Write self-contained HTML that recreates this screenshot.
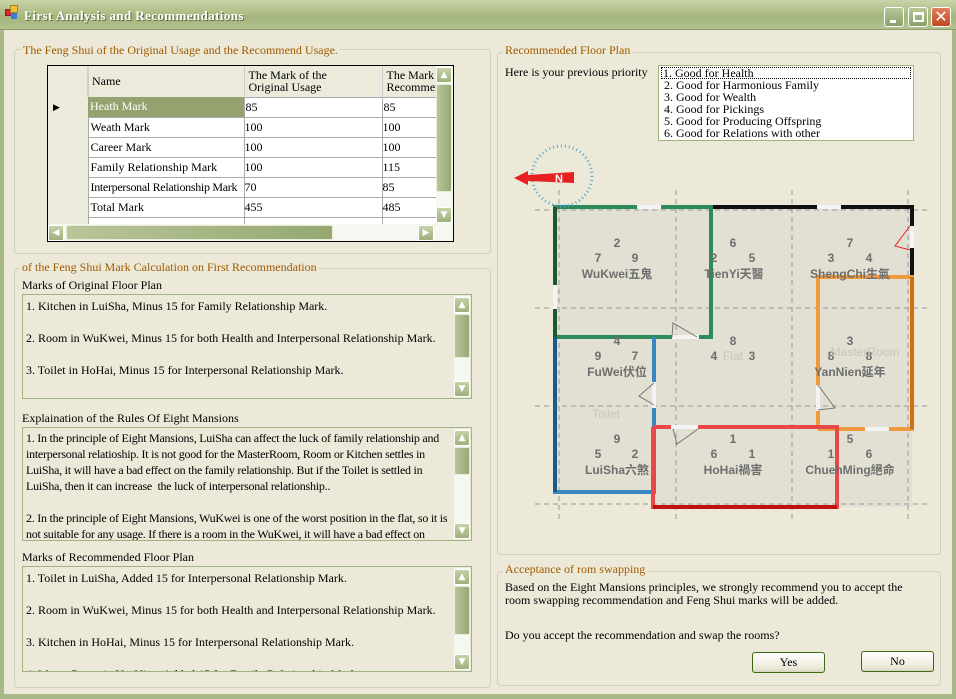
<!DOCTYPE html>
<html><head><meta charset="utf-8"><style>
*{box-sizing:border-box;margin:0;padding:0}
body{width:956px;height:699px;overflow:hidden;background:#ece9d8;font-family:"Liberation Serif",serif;font-size:12px;color:#000;position:relative}
.a{position:absolute}
.title{left:0;top:0;width:956px;height:30px;background:linear-gradient(#c8d4a8,#b0c088 40%,#a3b47c 60%,#b4c290);border-bottom:1px solid #8a9a68}
.frameL{left:0;top:30px;width:4px;height:669px;background:#a8b888}
.frameR{right:0;top:30px;width:4px;height:669px;background:#a8b888}
.frameB{left:0;top:694px;width:956px;height:5px;background:#a8b888}
.grp{border:1px solid #d0d0bf;border-radius:4px}
.lbl{color:#a05a00;background:#ece9d8;padding:0 2px;white-space:nowrap;line-height:14px}
.tb{border:1px solid #9fb482;background:#ece9d8;overflow:hidden;padding:2px 18px 0 3px;line-height:16px;white-space:nowrap}
.vs{position:absolute;right:1px;top:1px;bottom:1px;width:16px;background:#f7f7f2}
.sb{position:absolute;left:0;width:16px;height:16px;background:linear-gradient(#c6d2a8,#9eb07c);border:1px solid #fff;border-radius:2px;color:#fff;font-size:9px;text-align:center;line-height:14px;font-family:"DejaVu Sans",sans-serif}
.th{position:absolute;left:0;width:16px;background:linear-gradient(90deg,#b8c69a,#95a872);border:1px solid #e8ecd8;border-radius:2px}
table{border-collapse:collapse}
.btn{border:1px solid #3c6a10;border-radius:3px;background:linear-gradient(#fff,#ece9d8 80%,#d8d4c0);text-align:center;line-height:18px}
.l32{line-height:32px;padding-top:0}
.l32 .in{margin-top:-5px}
</style></head><body>
<div class="a title"></div>
<div class="a" style="left:5px;top:9px;width:7px;height:7px;background:#d23;border:1px solid #822"></div>
<div class="a" style="left:10px;top:5px;width:8px;height:8px;background:#f0c030;border:1px solid #a08020"></div>
<div class="a" style="left:11px;top:13px;width:6px;height:6px;background:#3a7ad8"></div>
<div class="a" style="left:24px;top:8px;color:#fff;font-weight:bold;font-size:13px;letter-spacing:0.4px;text-shadow:1px 1px 0 #5a6a40">First Analysis and Recommendations</div>
<div class="a" style="left:884px;top:7px;width:20px;height:20px;border:1px solid #fff;border-radius:3px;background:linear-gradient(#b8c898,#8aa068)"><div class="a" style="left:5px;top:12px;width:6px;height:3px;background:#fff"></div></div>
<div class="a" style="left:908px;top:7px;width:20px;height:20px;border:1px solid #fff;border-radius:3px;background:linear-gradient(#b8c898,#8aa068)"><div class="a" style="left:4px;top:4px;width:11px;height:10px;border:2px solid #fff;border-top-width:3px"></div></div>
<div class="a" style="left:931px;top:7px;width:20px;height:20px;border:1px solid #fff;border-radius:3px;background:linear-gradient(#e08060,#c04820);color:#fff;font:bold 16px/18px 'DejaVu Sans',sans-serif;text-align:center">✕</div>
<div class="a frameL"></div><div class="a frameR"></div><div class="a frameB"></div>

<!-- Group 1 -->
<div class="a grp" style="left:14px;top:49px;width:477px;height:205px"></div>
<div class="a lbl" style="left:21px;top:43px">The Feng Shui of the Original Usage and the Recommend Usage.</div>
<div class="a" style="left:47px;top:65px;width:407px;height:177px;border:1px solid #000;background:#fff;overflow:hidden">
 <table style="position:absolute;left:0;top:0;width:390px;table-layout:fixed">
  <colgroup><col style="width:40px"><col style="width:156px"><col style="width:138px"><col style="width:56px"></colgroup>
  <tr style="height:31px;background:#ebeadb"><td style="border-right:2px solid #d0cfc0"></td><td style="padding-left:3px">Name</td><td style="line-height:12px;border-left:1px solid #ccc;padding-left:4px">The Mark of the<br>Original Usage</td><td style="line-height:12px;border-left:1px solid #ccc;padding-left:4px;white-space:nowrap">The Mark<br>Recommen</td></tr>
  <tr style="height:20px"><td style="background:#ebeadb;font-size:9px;padding-left:5px">▶</td><td style="background:#95a270;color:#fff;padding-left:2px;border-bottom:1px solid #aaa">Heath Mark</td><td style="border:1px solid #aaa;padding-left:1px">85</td><td style="border:1px solid #aaa;padding-left:1px">85</td></tr>
  <tr style="height:20px"><td style="background:#ebeadb"></td><td style="border:1px solid #aaa;padding-left:2px">Weath Mark</td><td style="border:1px solid #aaa">100</td><td style="border:1px solid #aaa">100</td></tr>
  <tr style="height:20px"><td style="background:#ebeadb"></td><td style="border:1px solid #aaa;padding-left:2px">Career Mark</td><td style="border:1px solid #aaa">100</td><td style="border:1px solid #aaa">100</td></tr>
  <tr style="height:20px"><td style="background:#ebeadb"></td><td style="border:1px solid #aaa;padding-left:2px">Family Relationship Mark</td><td style="border:1px solid #aaa">100</td><td style="border:1px solid #aaa">115</td></tr>
  <tr style="height:20px"><td style="background:#ebeadb"></td><td style="border:1px solid #aaa;padding-left:2px;white-space:nowrap;letter-spacing:-0.3px">Interpersonal Relationship Mark</td><td style="border:1px solid #aaa">70</td><td style="border:1px solid #aaa">85</td></tr>
  <tr style="height:20px"><td style="background:#ebeadb"></td><td style="border:1px solid #aaa;padding-left:2px">Total Mark</td><td style="border:1px solid #aaa">455</td><td style="border:1px solid #aaa">485</td></tr>
  <tr style="height:20px"><td style="background:#ebeadb"></td><td style="border:1px solid #aaa"></td><td style="border:1px solid #aaa"></td><td style="border:1px solid #aaa"></td></tr>
 </table>
 <div class="a" style="left:388px;top:0;width:17px;height:158px;background:#f7f7f2">
  <div class="sb" style="top:1px">▲</div><div class="th" style="top:18px;height:108px"></div><div class="sb" style="top:141px">▼</div></div>
 <div class="a" style="left:0;top:158px;width:405px;height:17px;background:#f7f7f2">
  <div class="sb" style="left:0;top:1px">◀</div><div class="th" style="left:18px;top:1px;width:267px;height:15px"></div><div class="sb" style="left:370px;top:1px">▶</div></div>
</div>

<!-- Group 2 -->
<div class="a grp" style="left:14px;top:268px;width:477px;height:420px"></div>
<div class="a lbl" style="left:20px;top:260px">of the Feng Shui Mark Calculation on First Recommendation</div>
<div class="a" style="left:22px;top:278px">Marks of Original Floor Plan</div>
<div class="a tb l32" style="left:22px;top:294px;width:450px;height:105px"><div class="in">1. Kitchen in LuiSha, Minus 15 for Family Relationship Mark.<br>2. Room in WuKwei, Minus 15 for both Health and Interpersonal Relationship Mark.<br>3. Toilet in HoHai, Minus 15 for Interpersonal Relationship Mark.<br>4. MasterRoom in YanNien, Added 15 for Family Relationship Mark.</div>
 <div class="vs"><div class="sb" style="top:1px">▲</div><div class="th" style="top:18px;height:44px"></div><div class="sb" style="top:85px">▼</div></div></div>
<div class="a" style="left:22px;top:411px">Explaination of the Rules Of Eight Mansions</div>
<div class="a tb" style="left:22px;top:427px;width:450px;height:114px;white-space:normal;padding-right:16px;letter-spacing:-0.25px">1. In the principle of Eight Mansions, LuiSha can affect the luck of family relationship and interpersonal relatioship. It is not good for the MasterRoom, Room or Kitchen settles in LuiSha, it will have a bad effect on the family relationship. But if the Toilet is settled in LuiSha, then it can increase &nbsp;the luck of interpersonal relationship..<br><br>2. In the principle of Eight Mansions, WuKwei is one of the worst position in the flat, so it is not suitable for any usage. If there is a room in the WuKwei, it will have a bad effect on
 <div class="vs"><div class="sb" style="top:1px">▲</div><div class="th" style="top:18px;height:28px"></div><div class="sb" style="top:94px">▼</div></div></div>
<div class="a" style="left:22px;top:550px">Marks of Recommended Floor Plan</div>
<div class="a tb l32" style="left:22px;top:566px;width:450px;height:106px"><div class="in">1. Toilet in LuiSha, Added 15 for Interpersonal Relationship Mark.<br>2. Room in WuKwei, Minus 15 for both Health and Interpersonal Relationship Mark.<br>3. Kitchen in HoHai, Minus 15 for Interpersonal Relationship Mark.<br>4. MasterRoom in YanNien, Added 15 for Family Relationship Mark.</div>
 <div class="vs"><div class="sb" style="top:1px">▲</div><div class="th" style="top:18px;height:49px"></div><div class="sb" style="top:86px">▼</div></div></div>

<!-- Right group 1 -->
<div class="a grp" style="left:497px;top:52px;width:444px;height:503px"></div>
<div class="a lbl" style="left:503px;top:43px">Recommended Floor Plan</div>
<div class="a" style="left:505px;top:65px">Here is your previous priority</div>
<div class="a" style="left:658px;top:65px;width:256px;height:76px;border:1px solid #9fb482;background:#fff;line-height:12px;padding:1px 2px;white-space:nowrap">
<div style="outline:1px dotted #000;outline-offset:-1px;padding-left:2px;height:12px">1. Good for Health</div>
<div style="padding-left:3px">2. Good for Harmonious Family<br>3. Good for Wealth<br>4. Good for Pickings<br>5. Good for Producing Offspring<br>6. Good for Relations with other</div></div>

<svg class="a" style="left:0;top:0" width="956" height="699" font-family="Liberation Sans, Noto Sans CJK TC, sans-serif">
<rect x="555" y="207" width="357" height="300" fill="#e2dfd3"/>
<rect x="555" y="492" width="98" height="15" fill="#ece9d8"/>
<g stroke="#999" stroke-dasharray="5,4" stroke-width="1">
<line x1="559" y1="190" x2="559" y2="520"/><line x1="676" y1="190" x2="676" y2="520"/><line x1="792" y1="190" x2="792" y2="520"/><line x1="908" y1="190" x2="908" y2="520"/>
<line x1="535" y1="210" x2="930" y2="210"/><line x1="535" y1="308" x2="930" y2="308"/><line x1="535" y1="406" x2="930" y2="406"/><line x1="535" y1="504" x2="930" y2="504"/></g>
<polyline points="710,207 912,207 912,277" fill="none" stroke="#111" stroke-width="4"/>
<polyline points="555,337 555,207 711,207 711,337 555,337" fill="none" stroke="#2d8a5a" stroke-width="4"/>
<line x1="555" y1="207" x2="555" y2="337" stroke="#1a5a2a" stroke-width="4"/>
<polyline points="654,337 654,492 555,492 555,337" fill="none" stroke="#3a86c0" stroke-width="4"/>
<line x1="555" y1="337" x2="555" y2="492" stroke="#1a5a8a" stroke-width="4"/>
<polyline points="818,429 818,277 912,277 912,429 818,429" fill="none" stroke="#f09a40" stroke-width="4"/>
<line x1="912" y1="277" x2="912" y2="429" stroke="#d07010" stroke-width="4"/>
<polyline points="653,427 837,427 837,507 653,507 653,427" fill="none" stroke="#e84848" stroke-width="4"/>
<line x1="653" y1="507" x2="837" y2="507" stroke="#c01010" stroke-width="4"/>
<g fill="#f4f4f4"><rect x="637" y="205" width="24" height="4"/><rect x="817" y="205" width="24" height="4"/><rect x="553" y="285" width="4" height="24"/><rect x="910" y="226" width="4" height="22"/><rect x="672" y="335" width="27" height="4"/><rect x="652" y="382" width="4" height="26"/><rect x="816" y="385" width="4" height="26"/><rect x="671" y="425" width="27" height="4"/><rect x="865" y="427" width="24" height="4"/></g>
<g fill="none" stroke="#777" stroke-width="1"><path d="M672,337 L673,323 L697,337"/><path d="M654,383 L639,396 L654,405"/><path d="M818,385 L835,408 L818,410"/><path d="M673,429 L677,444 L698,429"/></g>
<path d="M910,226 L895,246 L910,250" fill="none" stroke="#e22" stroke-width="1"/>
<circle cx="562" cy="176" r="30" fill="none" stroke="#5aa8c8" stroke-width="3" stroke-dasharray="1,3"/>
<path d="M514,178 L528,171 L528,175 L574,172 L574,183 L528,181 L528,185 Z" fill="#e82020"/>
<text x="555" y="182" fill="#fff" font-weight="bold" font-size="11">N</text>
<g fill="#6e6e6e" font-size="12" font-weight="bold" text-anchor="middle">
<text x="617" y="247">2</text><text x="598" y="262">7</text><text x="635" y="262">9</text><text x="617" y="278">WuKwei五鬼</text>
<text x="733" y="247">6</text><text x="714" y="262">2</text><text x="752" y="262">5</text><text x="734" y="278">TienYi天醫</text>
<text x="850" y="247">7</text><text x="831" y="262">3</text><text x="869" y="262">4</text><text x="850" y="278">ShengChi生氣</text>
<text x="617" y="345">4</text><text x="598" y="360">9</text><text x="635" y="360">7</text><text x="617" y="376">FuWei伏位</text>
<text x="733" y="345">8</text><text x="714" y="360">4</text><text x="752" y="360">3</text>
<text x="850" y="345">3</text><text x="831" y="360">8</text><text x="869" y="360">8</text><text x="850" y="376">YanNien延年</text>
<text x="617" y="443">9</text><text x="598" y="458">5</text><text x="635" y="458">2</text><text x="617" y="474">LuiSha六煞</text>
<text x="733" y="443">1</text><text x="714" y="458">6</text><text x="752" y="458">1</text><text x="733" y="474">HoHai禍害</text>
<text x="850" y="443">5</text><text x="831" y="458">1</text><text x="869" y="458">6</text><text x="850" y="474">ChuehMing絕命</text>
</g>
<g fill="#c8c6bc" font-size="12" text-anchor="middle"><text x="733" y="360">Flat</text><text x="865" y="356">MasterRoom</text><text x="606" y="418">Toilet</text></g>
</svg>

<!-- Right group 2 -->
<div class="a grp" style="left:497px;top:571px;width:444px;height:115px"></div>
<div class="a lbl" style="left:503px;top:562px">Acceptance of rom swapping</div>
<div class="a" style="left:505px;top:581px;line-height:13px">Based on the Eight Mansions principles, we strongly recommend you to accept the<br>room swapping recommendation and Feng Shui marks will be added.</div>
<div class="a" style="left:505px;top:628px">Do you accept the recommendation and swap the rooms?</div>
<div class="a btn" style="left:752px;top:652px;width:73px;height:21px">Yes</div>
<div class="a btn" style="left:861px;top:651px;width:73px;height:21px">No</div>
</body></html>
